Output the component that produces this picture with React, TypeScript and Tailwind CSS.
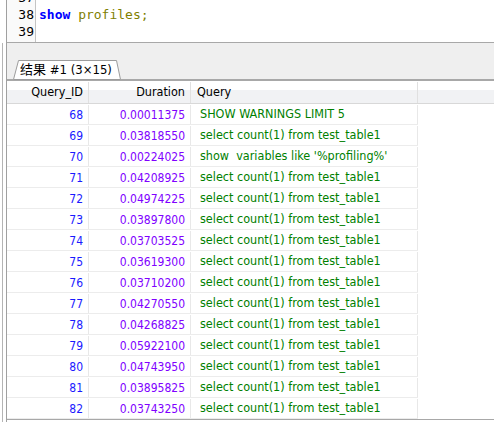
import React from 'react'

const rows: [number, string, string][] = [
  [68, '0.00011375', 'SHOW WARNINGS LIMIT 5'],
  [69, '0.03818550', 'select count(1) from test_table1'],
  [70, '0.00224025', "show  variables like '%profiling%'"],
  [71, '0.04208925', 'select count(1) from test_table1'],
  [72, '0.04974225', 'select count(1) from test_table1'],
  [73, '0.03897800', 'select count(1) from test_table1'],
  [74, '0.03703525', 'select count(1) from test_table1'],
  [75, '0.03619300', 'select count(1) from test_table1'],
  [76, '0.03710200', 'select count(1) from test_table1'],
  [77, '0.04270550', 'select count(1) from test_table1'],
  [78, '0.04268825', 'select count(1) from test_table1'],
  [79, '0.05922100', 'select count(1) from test_table1'],
  [80, '0.04743950', 'select count(1) from test_table1'],
  [81, '0.03895825', 'select count(1) from test_table1'],
  [82, '0.03743250', 'select count(1) from test_table1'],
]

export default function App() {
  return (
    <div className="w-[494px] h-[422px] overflow-hidden bg-white flex font-['DejaVu_Sans_Condensed','DejaVu_Sans',sans-serif] font-stretch-condensed text-[12px]">
      {/* left strip */}
      <div className="w-[6px] flex flex-col shrink-0">
        <div className="h-[43px]" />
        <div className="flex-1 ml-[2px] w-px bg-[#b4b4b4]" />
      </div>

      <div className="flex-1 flex flex-col border-l border-[#a0a0a0] min-w-0">
        {/* Editor */}
        <div className="h-[43px] shrink-0 flex border-b border-[#a8a8a8] overflow-hidden font-['DejaVu_Sans_Mono','Liberation_Mono',monospace] font-stretch-normal text-[13px]">
          <div className="w-[29px] border-r border-[#c4c4c4] bg-[#fafafa] flex flex-col items-end pr-[1px] -mt-[11px]">
            <div className="h-[17px] leading-[17px] text-black">37</div>
            <div className="h-[17px] leading-[17px] text-black">38</div>
            <div className="h-[17px] leading-[17px] text-black">39</div>
          </div>
          <div className="flex-1 flex flex-col pl-[3px] -mt-[11px]">
            <div className="h-[17px]" />
            <div className="h-[17px] leading-[17px] whitespace-pre">
              <span className="font-bold text-[#0000ff]">show</span>
              <span className="text-[#808000]"> profiles;</span>
            </div>
            <div className="h-[17px]" />
          </div>
        </div>

        {/* Tab band */}
        <div className="h-[38px] shrink-0 bg-[#efefef] flex items-end pl-[6px] border-b-2 border-[#a8a8a8]">
          <div className="relative h-[19px] w-[108px] flex items-center pl-[7px]">
            <svg className="absolute inset-0" width="108" height="20" viewBox="0 0 108 20">
              <polygon points="0.5,19.5 5.5,0.5 103.5,0.5 107.5,19.5" fill="#ffffff" stroke="#9c9c9c" strokeWidth="1" />
            </svg>
            <span className="relative text-[13px] leading-[19px] text-black whitespace-pre font-['DejaVu_Sans_Condensed','DejaVu_Sans','Noto_Sans_CJK_SC',sans-serif]">
              结果 #1 (3×15)
            </span>
          </div>
        </div>

        {/* Table */}
        <div className="flex-1 flex flex-col border-b border-[#a8a8a8]">
          <div className="h-[23px] shrink-0 flex border-b border-[#d8d8d8] bg-[linear-gradient(to_bottom,#ffffff_0%,#ffffff_40%,#f1f2f4_42%,#f1f2f4_100%)] text-black text-[12.5px] pt-[1px]">
            <div className="w-[82px] border-r border-[#e0e0e0] pr-[5px] flex items-center justify-end">Query_ID</div>
            <div className="w-[102px] border-r border-[#e0e0e0] pr-[5px] flex items-center justify-end">Duration</div>
            <div className="w-[227px] border-r border-[#e0e0e0] pl-[6px] flex items-center">Query</div>
            <div className="flex-1" />
          </div>
          {rows.map(([id, dur, q]) => (
            <div key={id} className="h-[21px] shrink-0 flex">
              <div className="w-[411px] flex border-b border-[#ececec] pt-[1px]">
                <div className="w-[82px] border-r border-[#e8e8e8] pr-[5px] flex items-center justify-end text-[#1a1aff]">{id}</div>
                <div className="w-[102px] border-r border-[#e8e8e8] pr-[5px] flex items-center justify-end text-[#8000ff]">{dur}</div>
                <div className="w-[227px] border-r border-[#e8e8e8] pl-[9px] flex items-center text-[#008000] text-[12.5px] whitespace-pre">{q}</div>
              </div>
            </div>
          ))}
        </div>
        <div className="h-[2px]" />
      </div>
    </div>
  )
}
